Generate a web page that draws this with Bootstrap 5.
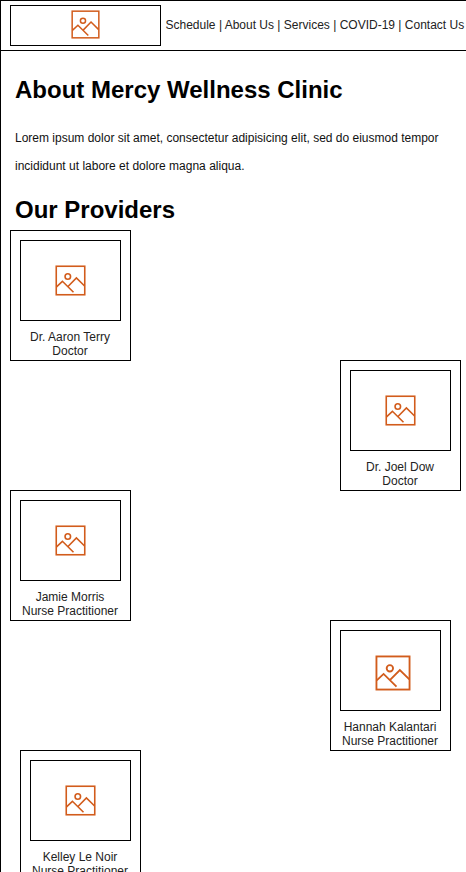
<!DOCTYPE html>
<html lang="en">
<head>
<meta charset="utf-8">
<meta name="viewport" content="width=device-width, initial-scale=1">
<title>Mercy Wellness Clinic</title>
<link href="https://cdn.jsdelivr.net/npm/bootstrap@5.3.0/dist/css/bootstrap.min.css" rel="stylesheet">
<style>
body{font-family:"Liberation Sans",Arial,sans-serif;font-size:12px;line-height:14px;color:#000;background:#fff}
.page{height:872px;border-left:1px solid #000}
.topbar{height:51px;border-top:1px solid #000;border-bottom:1px solid #000;padding:4px 0 0 9px}
.logo{width:151px;height:41px;border:1px solid #000;padding:4px 0 0 60px}
.logo svg{width:29px;height:29px}
.links{margin:13px 0 0 4.5px;color:#222}
.links a{color:inherit}
h1,h2{font-size:24px;font-weight:700;line-height:28px;margin:0 0 0 14px}
h1{padding-top:25px}
.intro{font-size:12px;line-height:28px;margin:20px 0 16px 14px;width:430px;color:#111}
.providers{padding-top:6px}
.provider{width:121px;height:131px;border:1px solid #000;margin:0 0 -1px 9px;padding-top:9px}
.provider.near-edge{margin-right:5px}
.provider.inset-right{margin-right:15px}
.provider.inset-left{margin-left:19px}
.photo{width:101px;height:81px;border:1px solid #000;margin:0 auto 9px}
.photo svg{width:31px;height:31px;margin:24px 0 0 34px}
.provider div+div{color:#222;padding-right:1px}
.photo.wide svg{width:36px;height:36px}
.glyph{fill:none;stroke:#d25c1c;stroke-width:1.6}
</style>
</head>
<body>
<svg class="d-none"><symbol id="picture" viewBox="0 0 31 31"><rect x="1.25" y="1.25" width="28.5" height="28.5"/><circle cx="12.8" cy="11.5" r="2.75"/><path d="M1.5 21.8 7.4 16.3 18.5 27.2M13 21.5 21.4 12.9 29.6 21"/></symbol></svg>
<div class="page overflow-hidden">
<header class="topbar d-flex align-items-start">
<div class="logo flex-shrink-0"><svg class="glyph d-block"><use href="#picture"/></svg></div>
<nav class="links text-nowrap"><a class="text-decoration-none" href="#">Schedule</a> | <a class="text-decoration-none" href="#">About Us</a> | <a class="text-decoration-none" href="#">Services</a> | <a class="text-decoration-none" href="#">COVID-19</a> | <a class="text-decoration-none" href="#">Contact Us</a></nav>
</header>
<main>
<h1>About Mercy Wellness Clinic</h1>
<p class="intro">Lorem ipsum dolor sit amet, consectetur adipisicing elit, sed do eiusmod tempor<br>incididunt ut labore et dolore magna aliqua.</p>
<h2>Our Providers</h2>
<section class="providers d-flex flex-column text-center">
<article class="provider"><div class="photo"><svg class="glyph d-block"><use href="#picture"/></svg></div><div>Dr. Aaron Terry<br>Doctor</div></article>
<article class="provider align-self-end near-edge"><div class="photo"><svg class="glyph d-block"><use href="#picture"/></svg></div><div>Dr. Joel Dow<br>Doctor</div></article>
<article class="provider"><div class="photo"><svg class="glyph d-block"><use href="#picture"/></svg></div><div>Jamie Morris<br>Nurse Practitioner</div></article>
<article class="provider align-self-end inset-right"><div class="photo wide"><svg class="glyph d-block"><use href="#picture"/></svg></div><div>Hannah Kalantari<br>Nurse Practitioner</div></article>
<article class="provider inset-left"><div class="photo"><svg class="glyph d-block"><use href="#picture"/></svg></div><div>Kelley Le Noir<br>Nurse Practitioner</div></article>
</section>
</main>
</div>
<script src="https://cdn.jsdelivr.net/npm/bootstrap@5.3.0/dist/js/bootstrap.bundle.min.js"></script>
</body>
</html>
